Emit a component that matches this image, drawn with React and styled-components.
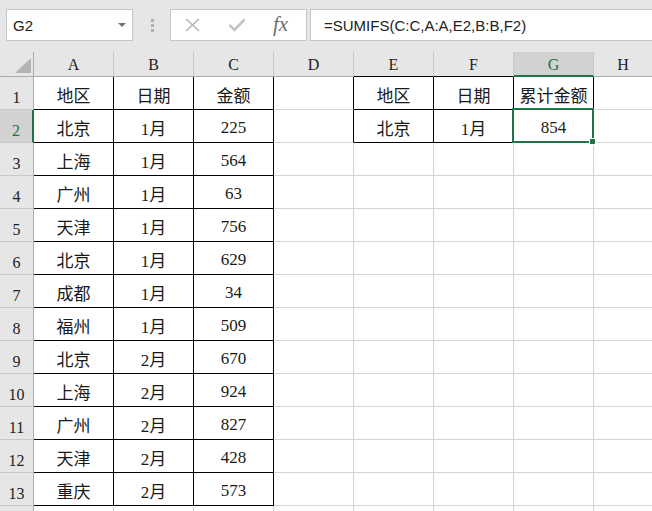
import React from 'react';
import styled, { createGlobalStyle } from 'styled-components';

const GREEN = '#217346';
const GRID = '#d4d4d4';
const INK = '#000';
const COLS = ['A', 'B', 'C', 'D', 'E', 'F', 'G', 'H'];

const sales = [
  ['地区', '日期', '金额'],
  ['北京', '1月', '225'],
  ['上海', '1月', '564'],
  ['广州', '1月', '63'],
  ['天津', '1月', '756'],
  ['北京', '1月', '629'],
  ['成都', '1月', '34'],
  ['福州', '1月', '509'],
  ['北京', '2月', '670'],
  ['上海', '2月', '924'],
  ['广州', '2月', '827'],
  ['天津', '2月', '428'],
  ['重庆', '2月', '573'],
];

const lookup = {
  1: ['地区', '日期', '累计金额'],
  2: ['北京', '1月', '854'],
};

const GlobalStyle = createGlobalStyle`
  html, body { margin: 0; padding: 0; background: #e6e6e6; overflow: hidden; }
`;

const Window = styled.div`
  width: 652px;
  height: 511px;
  overflow: hidden;
  background: #e6e6e6;
  font-family: "Liberation Serif", "Noto Sans CJK SC", serif;
`;

const Toolbar = styled.div`
  height: 52px;
  box-sizing: border-box;
  padding: 9px 0 0 6px;
  display: flex;
  align-items: flex-start;
`;

const NameBox = styled.div`
  width: 127px;
  height: 32px;
  box-sizing: border-box;
  background: #fff;
  border: 1px solid #c6c6c6;
  display: flex;
  align-items: center;
  justify-content: space-between;
  padding: 1px 6px 0 6px;
  font: 15px "Liberation Sans", sans-serif;
  color: #222;
`;

const Caret = styled.span`
  width: 0;
  height: 0;
  border-left: 4px solid transparent;
  border-right: 4px solid transparent;
  border-top: 4px solid #707070;
  margin-top: -1px;
`;

const Grip = styled.div`
  width: 37px;
  height: 32px;
  display: flex;
  flex-direction: column;
  align-items: center;
  justify-content: center;
  gap: 2px;
  padding-left: 1px;
  box-sizing: border-box;
`;

const Dot = styled.span`
  width: 3px;
  height: 3px;
  background: #b0b0b0;
`;

const FxBox = styled.div`
  width: 137px;
  height: 32px;
  box-sizing: border-box;
  background: #fff;
  border: 1px solid #c6c6c6;
  display: flex;
  align-items: center;
  padding-left: 14px;
  gap: 28px;
`;

const FxLabel = styled.span`
  font: italic 21px "Liberation Serif", serif;
  color: #6e6e6e;
  margin-left: -1px;
  margin-top: -2px;
`;

const FormulaBox = styled.div`
  flex: 1;
  margin-left: 3px;
  margin-right: -4px;
  height: 32px;
  box-sizing: border-box;
  background: #fff;
  border: 1px solid #c6c6c6;
  display: flex;
  align-items: center;
  padding: 1px 0 0 13px;
  font: 15px "Liberation Sans", sans-serif;
  color: #222;
  white-space: nowrap;
`;

const Sheet = styled.div`
  display: grid;
  grid-template-columns: 34px repeat(7, 80px) 1fr;
  grid-template-rows: 25px;
  grid-auto-rows: 33px;
`;

const Corner = styled.div`
  position: relative;
  background: #e6e6e6;
  border-right: 1px solid #ababab;
  border-bottom: 1px solid #ababab;
  &::after {
    content: '';
    position: absolute;
    right: 2px;
    bottom: 3px;
    width: 0;
    height: 0;
    border-left: 16px solid transparent;
    border-bottom: 15px solid #b4b4b4;
  }
`;

const ColHead = styled.div`
  box-sizing: border-box;
  background: ${p => (p.$active ? '#d2d2d2' : '#e6e6e6')};
  border-right: ${p => (p.$open ? 'none' : '1px solid #c8c8c8')};
  border-bottom: ${p => (p.$active ? `2px solid ${GREEN}` : `1px solid ${p.$edge || '#ababab'}`)};
  color: ${p => (p.$active ? GREEN : '#222')};
  font: 16px "Liberation Serif", serif;
  display: flex;
  align-items: center;
  justify-content: center;
  padding-top: 2px;
`;

const RowHead = styled.div`
  box-sizing: border-box;
  background: ${p => (p.$active ? '#d2d2d2' : '#e6e6e6')};
  border-right: ${p => (p.$active ? `2px solid ${GREEN}` : '1px solid #ababab')};
  border-bottom: 1px solid #c8c8c8;
  color: ${p => (p.$active ? GREEN : '#222')};
  font: 16px "Liberation Serif", serif;
  display: flex;
  align-items: flex-end;
  justify-content: center;
  padding-bottom: 2px;
`;

const Cell = styled.div`
  position: relative;
  box-sizing: border-box;
  background: #fff;
  border-right: ${p => (p.$open ? 'none' : `1px solid ${p.$r || GRID}`)};
  border-bottom: 1px solid ${p => p.$b || GRID};
  display: flex;
  align-items: center;
  justify-content: center;
  padding-top: 3px;
  font-family: "Liberation Serif", "Noto Sans CJK SC", serif;
  font-size: 17px;
  color: #1a1a1a;
  white-space: nowrap;
`;

const Selection = styled.span`
  position: absolute;
  left: -2px;
  top: -2px;
  right: -1px;
  bottom: -1px;
  border: 2px solid ${GREEN};
  z-index: 2;
  pointer-events: none;
  &::after {
    content: '';
    position: absolute;
    right: -4px;
    bottom: -4px;
    width: 5px;
    height: 5px;
    background: ${GREEN};
    border: 1px solid #fff;
  }
`;

function CancelIcon() {
  return (
    <svg width="15" height="14" viewBox="0 0 15 14">
      <path d="M1 1 L14 13 M14 1 L1 13" stroke="#b4b4b4" strokeWidth="1.5" fill="none" />
    </svg>
  );
}

function EnterIcon() {
  return (
    <svg width="18" height="14" viewBox="0 0 18 14">
      <path d="M1.5 7 L6.5 12 L16.5 1.5" stroke="#c4c4c4" strokeWidth="2.6" fill="none" />
    </svg>
  );
}

function cellFor(r, ci) {
  const inMain = ci <= 2 && r <= 13;
  const inSide = ci >= 4 && ci <= 6 && r <= 2;
  let text = '';
  if (inMain) text = sales[r - 1][ci];
  if (inSide) text = lookup[r][ci - 4];
  return {
    text,
    right: inMain || inSide || (ci === 3 && r <= 2) ? INK : GRID,
    bottom: inMain || inSide ? INK : GRID,
  };
}

export default function App() {
  // row 14 only peeks in at the bottom edge, its number is below the fold
  const rows = Array.from({ length: 14 }, (_, i) => i + 1);

  return (
    <Window>
      <GlobalStyle />
      <Toolbar>
        <NameBox>
          G2
          <Caret />
        </NameBox>
        <Grip>
          <Dot />
          <Dot />
          <Dot />
        </Grip>
        <FxBox>
          <CancelIcon />
          <EnterIcon />
          <FxLabel>fx</FxLabel>
        </FxBox>
        <FormulaBox>=SUMIFS(C:C,A:A,E2,B:B,F2)</FormulaBox>
      </Toolbar>

      <Sheet>
        <Corner />
        {COLS.map(c => (
          <ColHead
            key={c}
            $active={c === 'G'}
            $edge={c === 'E' || c === 'F' ? INK : undefined}
            $open={c === 'H'}
          >
            {c}
          </ColHead>
        ))}
        {rows.map(r => (
          <React.Fragment key={r}>
            <RowHead $active={r === 2}>{r <= 13 ? r : ''}</RowHead>
            {COLS.map((c, ci) => {
              const cell = cellFor(r, ci);
              return (
                <Cell key={c} $r={cell.right} $b={cell.bottom} $open={c === 'H'}>
                  {cell.text}
                  {r === 2 && c === 'G' && <Selection />}
                </Cell>
              );
            })}
          </React.Fragment>
        ))}
      </Sheet>
    </Window>
  );
}
